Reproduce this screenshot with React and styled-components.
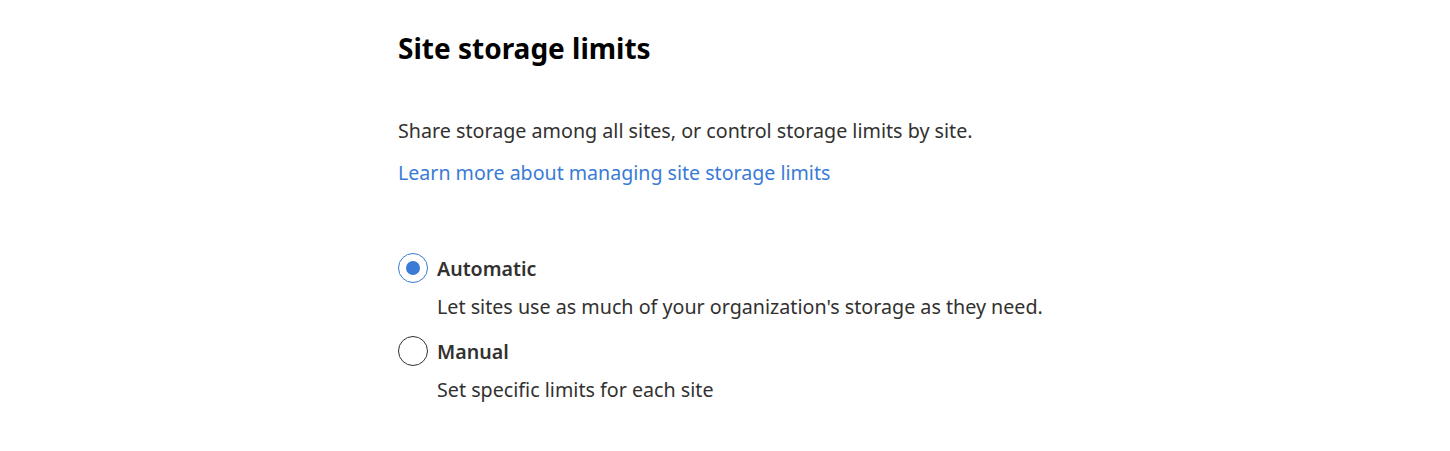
import React, { useState } from 'react';
import styled, { createGlobalStyle } from 'styled-components';

const GlobalStyle = createGlobalStyle`
  body {
    margin: 0;
    background: #fff;
    font-family: "Noto Sans", "Open Sans", sans-serif;
    color: #323130;
  }
`;

const Page = styled.div`
  padding: 30px 0 0 398px;
`;

const Title = styled.h2`
  margin: 0;
  font-size: 28px;
  line-height: 36px;
  font-weight: 700;
  color: #000;
`;

const Text = styled.p`
  margin: ${(p) => p.$top || 0}px 0 0;
  font-size: 19.7px;
  line-height: 28px;
  color: #323130;
`;

const Link = styled.a`
  display: block;
  margin-top: 14px;
  font-size: 19.6px;
  line-height: 28px;
  color: #3a7bd5;
  text-decoration: none;
  cursor: pointer;
`;

const Group = styled.div`
  margin-top: 65px;
  display: flex;
  flex-direction: column;
`;

const Option = styled.div`
  display: flex;
  flex-direction: column;
  & + & {
    margin-top: 14px;
  }
`;

const Row = styled.label`
  display: flex;
  align-items: center;
  gap: 9px;
  height: 32px;
  cursor: pointer;
`;

const Circle = styled.span`
  box-sizing: border-box;
  width: 30px;
  height: 30px;
  border-radius: 50%;
  border: 1px solid ${(p) => (p.$checked ? '#3a7bd5' : '#323130')};
  display: flex;
  align-items: center;
  justify-content: center;

  &::after {
    content: '';
    width: 14px;
    height: 14px;
    border-radius: 50%;
    background: #3a7bd5;
    display: ${(p) => (p.$checked ? 'block' : 'none')};
  }
`;

const Label = styled.span`
  font-size: 19.6px;
  font-weight: 600;
  color: #323130;
`;

const Desc = styled.div`
  margin: 9px 0 0 39px;
  font-size: 19.7px;
  line-height: 28px;
  color: #323130;
`;

const options = [
  { id: 'auto', label: 'Automatic', desc: "Let sites use as much of your organization's storage as they need." },
  { id: 'manual', label: 'Manual', desc: 'Set specific limits for each site' },
];

export default function App() {
  const [mode, setMode] = useState('auto');
  return (
    <Page>
      <GlobalStyle />
      <Title>Site storage limits</Title>
      <Text $top={51}>Share storage among all sites, or control storage limits by site.</Text>
      <Link>Learn more about managing site storage limits</Link>
      <Group>
        {options.map((o) => (
          <Option key={o.id}>
            <Row onClick={() => setMode(o.id)}>
              <Circle $checked={mode === o.id} />
              <Label>{o.label}</Label>
            </Row>
            <Desc>{o.desc}</Desc>
          </Option>
        ))}
      </Group>
    </Page>
  );
}
